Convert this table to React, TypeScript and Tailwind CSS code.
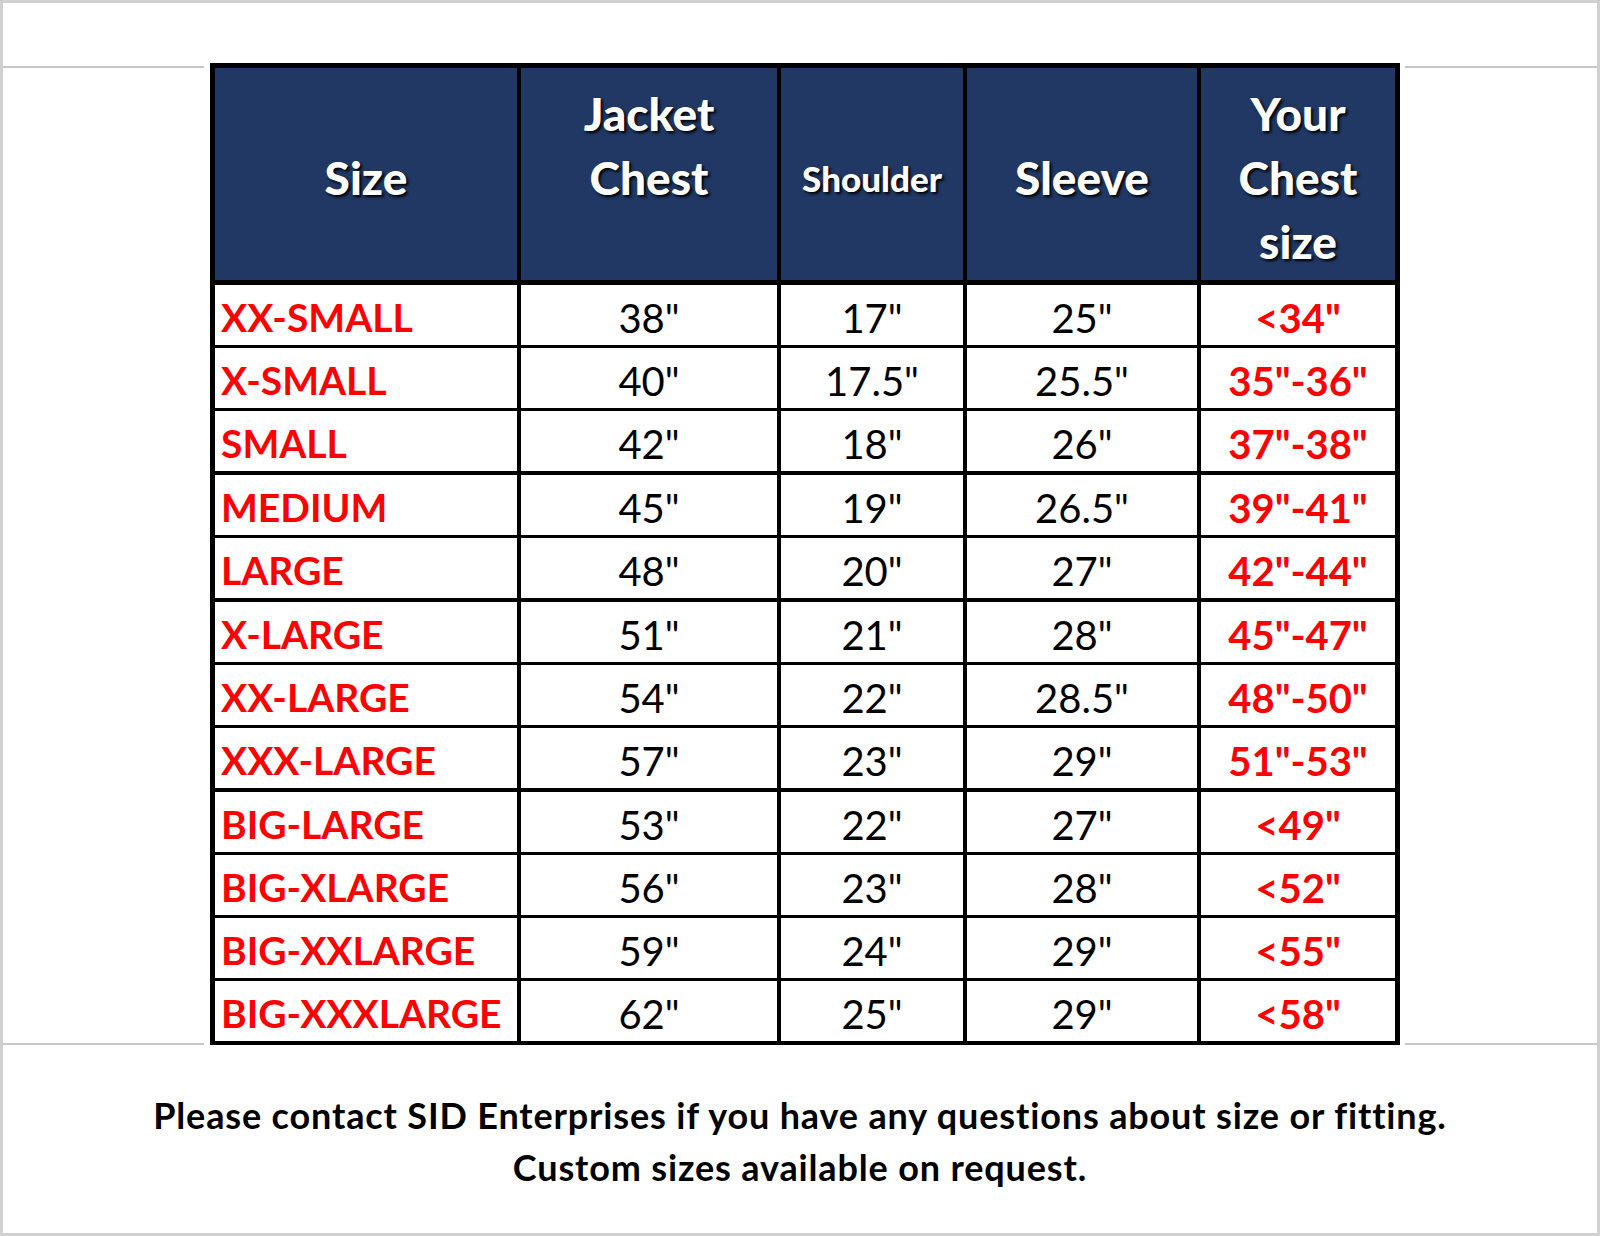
import React from 'react';

type Row = {
  size: string;
  chest: string;
  shoulder: string;
  sleeve: string;
  yours: string;
  thick?: boolean;
};

const rows: Row[] = [
  { size: 'XX-SMALL', chest: '38"', shoulder: '17"', sleeve: '25"', yours: '<34"' },
  { size: 'X-SMALL', chest: '40"', shoulder: '17.5"', sleeve: '25.5"', yours: '35"-36"' },
  { size: 'SMALL', chest: '42"', shoulder: '18"', sleeve: '26"', yours: '37"-38"' },
  { size: 'MEDIUM', chest: '45"', shoulder: '19"', sleeve: '26.5"', yours: '39"-41"', thick: true },
  { size: 'LARGE', chest: '48"', shoulder: '20"', sleeve: '27"', yours: '42"-44"' },
  { size: 'X-LARGE', chest: '51"', shoulder: '21"', sleeve: '28"', yours: '45"-47"', thick: true },
  { size: 'XX-LARGE', chest: '54"', shoulder: '22"', sleeve: '28.5"', yours: '48"-50"' },
  { size: 'XXX-LARGE', chest: '57"', shoulder: '23"', sleeve: '29"', yours: '51"-53"' },
  { size: 'BIG-LARGE', chest: '53"', shoulder: '22"', sleeve: '27"', yours: '<49"', thick: true },
  { size: 'BIG-XLARGE', chest: '56"', shoulder: '23"', sleeve: '28"', yours: '<52"' },
  { size: 'BIG-XXLARGE', chest: '59"', shoulder: '24"', sleeve: '29"', yours: '<55"' },
  { size: 'BIG-XXXLARGE', chest: '62"', shoulder: '25"', sleeve: '29"', yours: '<58"' },
];

const cols = 'grid grid-cols-[302px_256px_182px_230px_194px] gap-x-[4px]';

const HeadCell: React.FC<{ lines: string[]; small?: boolean }> = ({ lines, small }) => (
  <div className="bg-[#213864] flex flex-col items-center justify-center pt-[8px] text-white font-black [text-shadow:2px_2px_3px_#000]">
    {lines.map((l, i) => (
      <div key={i} className={small ? 'text-[35px] leading-[64px]' : 'text-[46px] leading-[64px]'}>
        {l}
      </div>
    ))}
  </div>
);

const App: React.FC = () => {
  return (
    <div className="w-[1600px] h-[1236px] bg-white border-[3px] border-[#d0d0d0] flex flex-col [font-family:Lato,'Open_Sans',sans-serif]">
      <div className="h-[60px]" />

      {/* Table band */}
      <div className="flex items-stretch">
        <div className="w-[201px] mr-[6px] mt-[3px] border-t-2 border-b-2 border-[#c8c8c8]" />

        <div className="w-[1190px] bg-black px-[5px] pt-[5px] pb-[4px]">
          {/* Header */}
          <div className={`${cols} h-[212px]`}>
            <HeadCell lines={['Size']} />
            <HeadCell lines={['Jacket', 'Chest', '\u00a0']} />
            <HeadCell lines={['Shoulder']} small />
            <HeadCell lines={['Sleeve']} />
            <HeadCell lines={['Your', 'Chest', 'size']} />
          </div>

          {rows.map((r, i) => (
            <div
              key={r.size}
              className={`${cols} h-[60px] ${i === 0 ? 'mt-[5px]' : r.thick ? 'mt-[4px]' : 'mt-[3px]'}`}
            >
              <div className="bg-white flex items-center pl-[6px] pt-[5px] text-[39px] leading-none font-bold text-[#ff0000] whitespace-nowrap">
                {r.size}
              </div>
              <div className="bg-white flex items-center justify-center pt-[5px] text-[40px] leading-none text-black">
                {r.chest}
              </div>
              <div className="bg-white flex items-center justify-center pt-[5px] text-[40px] leading-none text-black">
                {r.shoulder}
              </div>
              <div className="bg-white flex items-center justify-center pt-[5px] text-[40px] leading-none text-black">
                {r.sleeve}
              </div>
              <div className="bg-white flex items-center justify-center pt-[5px] text-[40px] leading-none font-bold text-[#ff0000]">
                {r.yours}
              </div>
            </div>
          ))}
        </div>

        <div className="flex-1 ml-[5px] mt-[3px] border-t-2 border-b-2 border-[#c8c8c8]" />
      </div>

      {/* Footer note */}
      <div className="flex flex-col items-center pt-[44px] text-[36px] leading-[52px] font-bold tracking-[0.85px] text-black">
        <p>Please contact SID Enterprises if you have any questions about size or fitting.</p>
        <p>Custom sizes available on request.</p>
      </div>
    </div>
  );
};

export default App;
